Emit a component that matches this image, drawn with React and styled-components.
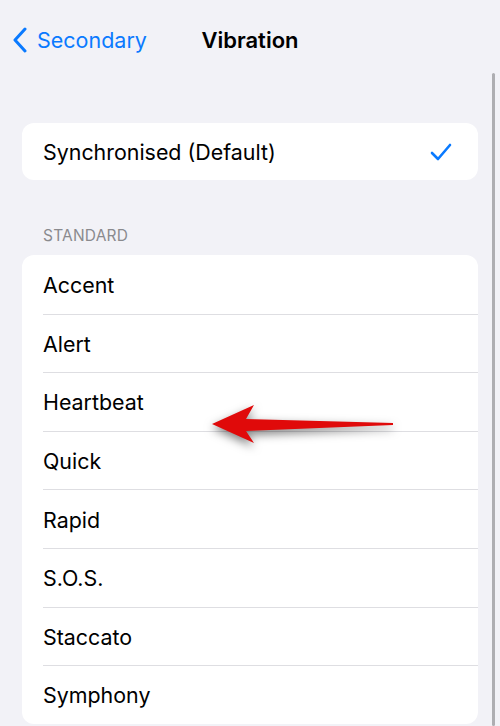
import React from "react";
import styled, { createGlobalStyle } from "styled-components";

const Global = createGlobalStyle`
  html, body {
    margin: 0;
    padding: 0;
    background: #f2f2f7;
  }
  body {
    font-family: Inter, "Liberation Sans", sans-serif;
    -webkit-font-smoothing: antialiased;
  }
`;

const Screen = styled.div`
  position: relative;
  width: 500px;
  height: 726px;
  overflow: hidden;
  background: #f2f2f7;
`;

const NavBar = styled.div`
  position: relative;
  height: 80px;
  display: flex;
  align-items: flex-start;
  padding-top: 25px;
  box-sizing: border-box;
`;

const Back = styled.div`
  display: flex;
  align-items: center;
  gap: 9px;
  padding-left: 12px;
  color: #0a7aff;
  font-size: 21.5px;
  height: 30px;
`;

const Title = styled.div`
  position: absolute;
  left: 0;
  right: 0;
  top: 25px;
  height: 30px;
  display: flex;
  align-items: center;
  justify-content: center;
  font-size: 22px;
  font-weight: 600;
  color: #000;
`;

const Content = styled.div`
  padding: 43px 22px 0 22px;
  display: flex;
  flex-direction: column;
`;

const Card = styled.div`
  background: #fff;
  border-radius: 12px;
  overflow: hidden;
`;

const Row = styled.div`
  height: ${p => p.$h || 58.6}px;
  display: flex;
  align-items: center;
  justify-content: space-between;
  margin-left: 21px;
  padding: 1px 26px 0 0;
  font-size: 21.4px;
  color: #000;
  box-sizing: border-box;
  border-top: ${p => (p.$first ? "none" : "1px solid #dedee2")};
`;

const SectionHeader = styled.div`
  margin: 46px 0 0 21px;
  height: 29px;
  font-size: 15.5px;
  color: #8a8a8e;
  letter-spacing: 0.2px;
`;

const ScrollBar = styled.div`
  position: absolute;
  right: 5px;
  top: 73px;
  bottom: 0;
  width: 3px;
  border-radius: 2px;
  background: #aeaeb2;
`;

const Arrow = styled.svg`
  position: absolute;
  left: 200px;
  top: 395px;
  filter: drop-shadow(0 4px 5px rgba(0, 0, 0, 0.5));
`;

const items = ["Accent", "Alert", "Heartbeat", "Quick", "Rapid", "S.O.S.", "Staccato", "Symphony"];

export default function App() {
  return (
    <Screen>
      <Global />
      <NavBar>
        <Back>
          <svg width="16" height="26" viewBox="0 0 16 26">
            <path d="M13 2 L3 13 L13 24" fill="none" stroke="#0a7aff" strokeWidth="3" strokeLinecap="round" strokeLinejoin="round" />
          </svg>
          Secondary
        </Back>
        <Title>Vibration</Title>
      </NavBar>
      <Content>
        <Card>
          <Row $first $h={57}>
            Synchronised (Default)
            <svg width="22" height="18" viewBox="0 0 22 18">
              <path d="M2 10 L8 16 L20 2" fill="none" stroke="#0a7aff" strokeWidth="2.6" strokeLinecap="round" strokeLinejoin="round" />
            </svg>
          </Row>
        </Card>
        <SectionHeader>STANDARD</SectionHeader>
        <Card>
          {items.map((t, i) => (
            <Row key={t} $first={i === 0}>{t}</Row>
          ))}
        </Card>
      </Content>
      <ScrollBar />
      <Arrow width="210" height="60" viewBox="0 0 210 60">
        <polygon
          points="12,29 54,10 46,24 193,28 193,30 46,36 54,48"
          fill="#e00a0a"
        />
      </Arrow>
    </Screen>
  );
}
